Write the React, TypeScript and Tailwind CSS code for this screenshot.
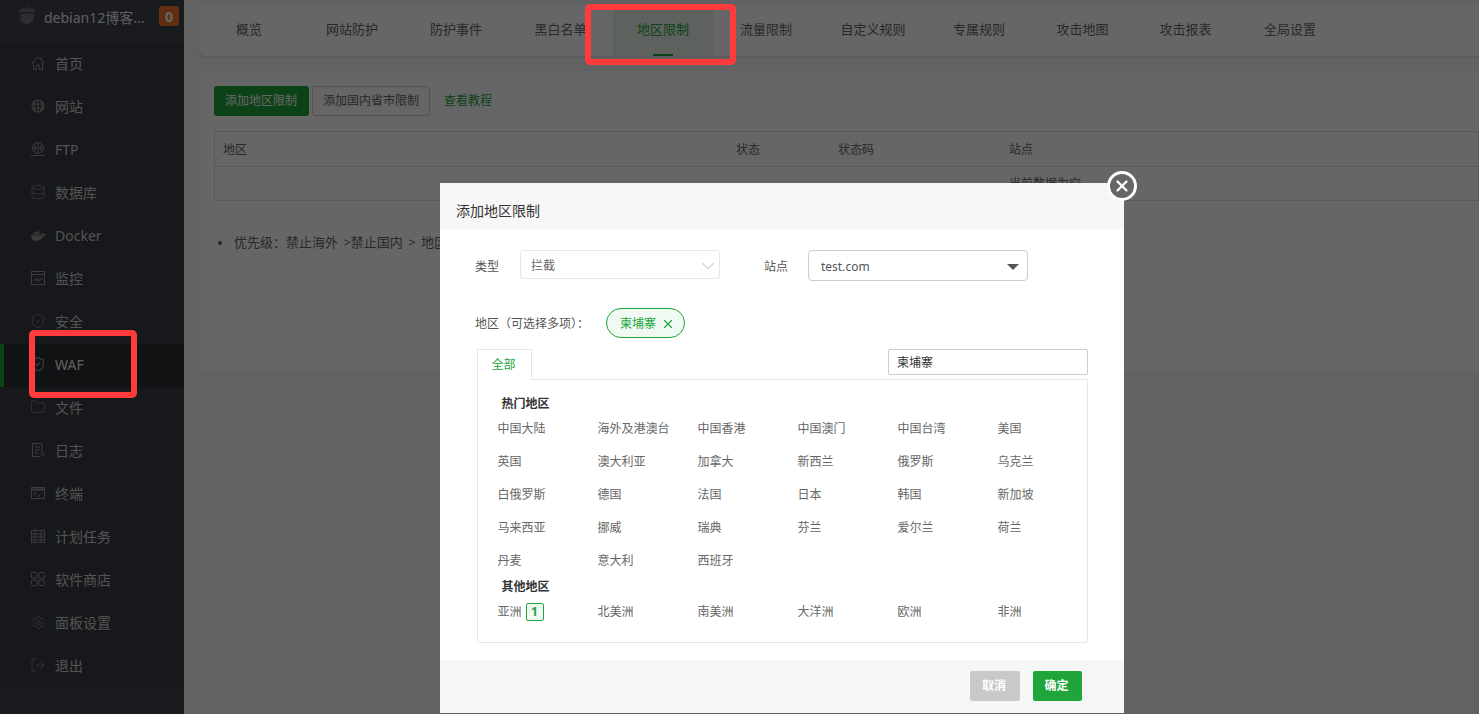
import React from 'react';
import {
  Database,
  ShieldCheck,
  Folder,
  Settings,
  LogOut,
  ChevronDown,
  X,
} from 'lucide-react';
import { FaDocker } from 'react-icons/fa';

const FONT = "font-['Noto_Sans','Noto_Sans_CJK_SC',sans-serif]";

const HomeIcon = () => (
  <svg width="14" height="14" viewBox="0 0 14 14" fill="none" stroke="currentColor" strokeWidth="1">
    <path d="M.5 7L7 .8l6.500 6.200M2.500 6v7.500h3.200V9h2.600v4.500h3.200V6M10 1.500v2.500" />
  </svg>
);

const FtpIcon = () => (
  <svg width="14" height="14" viewBox="0 0 14 14" fill="none" stroke="currentColor" strokeWidth="1">
    <circle cx="7" cy="6" r="5.5" />
    <path d="M1.5 6h11M7 .5v11M3.500 2.500c1 2 1 5 0 7M10.500 2.500c-1 2-1 5 0 7M0 13.500h14" />
  </svg>
);

const GlobeFilledIcon = () => (
  <svg width="14" height="14" viewBox="0 0 14 14" fill="none" stroke="currentColor" strokeWidth="1.2">
    <circle cx="7" cy="7" r="6" />
    <path d="M1 5h12M1 9h12M7 1v12M4 2c-1 3-1 7 0 10M10 2c1 3 1 7 0 10" />
  </svg>
);

const MonitorIcon = () => (
  <svg width="14" height="14" viewBox="0 0 14 14" fill="none" stroke="currentColor" strokeWidth="1">
    <rect x=".5" y=".5" width="13" height="13" />
    <path d="M.5 3.500h13M2 9h3l1-2 1.500 4L9 8h3" />
  </svg>
);

const LogIcon = () => (
  <svg width="14" height="14" viewBox="0 0 14 14" fill="none" stroke="currentColor" strokeWidth="1">
    <path d="M9 13.500H1.500V.5h9.500V9M4 4h5M4 7h5M4 10h3" />
    <circle cx="11.500" cy="11.500" r="1.500" />
  </svg>
);

const TerminalIcon = () => (
  <svg width="14" height="14" viewBox="0 0 14 14" fill="none" stroke="currentColor" strokeWidth="1">
    <rect x=".5" y="1.500" width="13" height="11" />
    <path d="M.5 3.500h13" strokeWidth="2" />
    <path d="M3 6l2 1.500L3 9M6 10h3" />
  </svg>
);

const TaskIcon = () => (
  <svg width="14" height="14" viewBox="0 0 14 14" fill="none" stroke="currentColor" strokeWidth="1">
    <rect x=".5" y="1.500" width="13" height="12" />
    <path d="M.5 5h13M.5 8h13M.5 11h13M4 .5v13M10 .5v13" />
  </svg>
);

const StoreIcon = () => (
  <svg width="14" height="14" viewBox="0 0 14 14" fill="none" stroke="currentColor" strokeWidth="1">
    <rect x=".5" y=".5" width="5.500" height="5.500" rx="1" />
    <rect x="8" y=".5" width="5.500" height="5.500" rx="1" />
    <rect x=".5" y="8" width="5.500" height="5.500" rx="1" />
    <rect x="8" y="8" width="5.500" height="5.500" rx="1" />
  </svg>
);

const Logo = () => (
  <svg width="18" height="20" viewBox="0 0 18 20" fill="#6f7174">
    <path d="M2.500 7.500h13V15l-6.500 4-6.500-4z" />
    <path d="M9 0l2 2.500h4l3 2.500-.5 1H.5L0 5l3-2.500h4z" />
  </svg>
);

const menu = [
  { label: '首页', icon: <HomeIcon /> },
  { label: '网站', icon: <GlobeFilledIcon /> },
  { label: 'FTP', icon: <FtpIcon /> },
  { label: '数据库', icon: <Database size={16} strokeWidth={1.1} className="-ml-px" /> },
  { label: 'Docker', icon: <FaDocker size={15} /> },
  { label: '监控', icon: <MonitorIcon /> },
  { label: '安全', icon: <ShieldCheck size={16} strokeWidth={1.1} className="-ml-px" /> },
  { label: 'WAF', icon: <ShieldCheck size={16} strokeWidth={1.8} className="-ml-px" />, active: true },
  { label: '文件', icon: <Folder size={16} strokeWidth={1.1} className="-ml-px" /> },
  { label: '日志', icon: <LogIcon /> },
  { label: '终端', icon: <TerminalIcon /> },
  { label: '计划任务', icon: <TaskIcon /> },
  { label: '软件商店', icon: <StoreIcon /> },
  { label: '面板设置', icon: <Settings size={15} strokeWidth={1.1} /> },
  { label: '退出', icon: <LogOut size={16} strokeWidth={1.1} className="-ml-px" /> },
];

const tabs = [
  { label: '网站防护', width: 'w-[104px]' },
  { label: '防护事件', width: 'w-[104px]' },
  { label: '黑白名单', width: 'w-[105px]' },
  { label: '地区限制', width: 'w-[100px]', active: true },
  { label: '流量限制', width: 'w-[106px]' },
  { label: '自定义规则', width: 'w-[108px]' },
  { label: '专属规则', width: 'w-[104px]' },
  { label: '攻击地图', width: 'w-[103px]' },
  { label: '攻击报表', width: 'w-[103px]' },
  { label: '全局设置', width: 'w-[106px]' },
];

const hotAreas = [
  '中国大陆', '海外及港澳台', '中国香港', '中国澳门', '中国台湾', '美国',
  '英国', '澳大利亚', '加拿大', '新西兰', '俄罗斯', '乌克兰',
  '白俄罗斯', '德国', '法国', '日本', '韩国', '新加坡',
  '马来西亚', '挪威', '瑞典', '芬兰', '爱尔兰', '荷兰',
  '丹麦', '意大利', '西班牙',
];

const otherAreas = ['亚洲', '北美洲', '南美洲', '大洋洲', '欧洲', '非洲'];

const Sidebar = () => (
  <aside className="w-[184px] shrink-0 bg-[#3f454f] flex flex-col">
    <div className="h-[43px] flex items-start pl-[18px] pr-[5px] pt-[6px]">
      <Logo />
      <span className="ml-[8px] w-[115px] h-[20px] leading-[24px] text-[14px] text-[#eaeaea] truncate">debian12博客...</span>
      <span className="w-[20px] h-[20px] rounded-[3px] bg-[#f0742a] text-white text-[14px] font-bold flex items-center justify-center">0</span>
    </div>
    <nav className="bg-[#373c44]">
      {menu.map((item) => (
        <div
          key={item.label}
          className={
            item.active
              ? 'h-[43px] flex items-center pb-[3px] pl-[27px] border-l-[4px] border-[#20a53a] bg-[#2b2e32] text-[#eeeeee] text-[14px]'
              : 'h-[43px] flex items-center pb-[3px] pl-[31px] text-[#d0d0d0] text-[14px]'
          }
        >
          <span className="w-[24px] flex text-[#939393]">{item.icon}</span>
          <span>{item.label}</span>
        </div>
      ))}
    </nav>
  </aside>
);

const Background = () => (
  <main className="flex-1 min-w-0 bg-[#f5f5f5] pl-[15px] pt-[4px]">
    <div className="h-[52px] bg-white rounded-l-[6px] flex items-stretch pl-[11px] shadow-sm">
      <div className="w-[90px] pl-[26px] flex items-center text-[13px] text-[#666666]">概览</div>
      {tabs.map((tab) => (
        <div
          key={tab.label}
          className={
            tab.active
              ? `${tab.width} relative flex items-center justify-center text-[13px] text-[#20a53a] bg-[#e9f6eb]`
              : `${tab.width} flex items-center justify-center text-[13px] text-[#666666] whitespace-nowrap`
          }
        >
          {tab.label}
          {tab.active && <span className="absolute bottom-0 left-[40px] w-[20px] h-[2px] bg-[#20a53a]" />}
        </div>
      ))}
    </div>
    <div className="mt-[15px] h-[300px] bg-white rounded-l-[6px] pl-[15px] pt-[15px]">
      <div className="flex items-center h-[30px] text-[12px]">
        <span className="h-[30px] w-[95px] pr-[1px] flex items-center justify-center bg-[#20a53a] text-white rounded-[3px]">添加地区限制</span>
        <span className="ml-[3px] h-[30px] w-[118px] flex items-center justify-center border border-[#cccccc] text-[#666666] rounded-[3px]">添加国内省市限制</span>
        <span className="ml-[14px] text-[#20a53a]">查看教程</span>
      </div>
      <div className="mt-[15px] border border-[#dddddd] text-[12px] text-[#666666]">
        <div className="h-[35px] flex items-center pl-[8px] pt-[1px] border-b border-[#dddddd]">
          <span className="w-[513px]">地区</span>
          <span className="w-[102px]">状态</span>
          <span className="w-[171px]">状态码</span>
          <span>站点</span>
        </div>
        <div className="h-[33px] flex items-center pl-[794px]">当前数据为空</div>
      </div>
      <ul className="mt-[32px] pl-[4px] text-[13px] text-[#666666]">
        <li className="flex items-center [word-spacing:2px]">
          <span className="w-[4px] h-[4px] rounded-full bg-[#666666] mr-[12px]" />
          优先级：禁止海外 &gt;禁止国内 &gt; 地区限制
        </li>
      </ul>
    </div>
  </main>
);

const Dialog = () => (
  <div className="absolute left-[440px] top-[183px] w-[684px] h-[530px] bg-white flex flex-col text-[12px] text-[#555555]">
    <div className="h-[46px] shrink-0 bg-[#f7f7f7] flex items-center pl-[16px] pt-[8px] text-[14px] text-[#333333]">添加地区限制</div>
    <div className="flex-1 pl-[35px] pr-[36px] pt-[21px]">
      <div className="flex items-start h-[31px]">
        <span className="w-[45px] h-[31px] pt-[2px] flex items-center text-[#555555]">类型</span>
        <div className="w-[200px] h-[29px] border border-[#e4e7ed] rounded-[3px] pl-[10px] pr-[0px] pt-[2px] flex items-center justify-between text-[#666666]">
          拦截
          <ChevronDown size={22} strokeWidth={0.8} className="text-[#999999]" />
        </div>
        <span className="ml-[44px] w-[44px] h-[31px] pt-[2px] flex items-center text-[#555555]">站点</span>
        <div className="w-[220px] h-[31px] border border-[#cccccc] rounded-[4px] pl-[12px] pr-[5px] pt-[2px] flex items-center justify-between text-[12px] text-[#555555]">
          test.com
          <span className="w-0 h-0 border-x-[6px] border-x-transparent border-t-[6px] border-t-[#555555] mr-[3px]" />
        </div>
      </div>
      <div className="mt-[27px] flex items-center h-[30px]">
        <span className="w-[131px] pt-[1px] text-[#555555]">地区（可选择多项）：</span>
        <span className="w-[79px] h-[30px] rounded-full border border-[#20a53a] bg-[#f0f9f2] text-[#20a53a] flex items-center pl-[13px] pt-[1px]">
          柬埔寨
          <X size={14} strokeWidth={2} className="ml-[5px]" />
        </span>
      </div>
      <div className="mt-[11px] flex items-start justify-between h-[31px] pl-[2px]">
        <span className="relative z-10 w-[55px] h-[31px] border border-[#e6e6e6] border-b-white bg-white text-[#20a53a] flex items-center justify-center pr-[2px]">全部</span>
        <input
          readOnly
          value="柬埔寨"
          className="w-[200px] h-[26px] border border-[#cccccc] rounded-[2px] pl-[8px] text-[12px] text-[#333333] outline-none"
        />
      </div>
      <div className="-mt-px ml-[2px] h-[264px] border border-[#e6e6e6] rounded-[2px] pt-[15px] pl-[19.500px] text-[#666666]">
        <div className="h-[18px] pl-[4px] flex items-center font-bold text-[#333333]">热门地区</div>
        <div className="grid grid-cols-[repeat(6,100px)] auto-rows-[33px]">
          {hotAreas.map((a) => (
            <span key={a} className="flex items-center pb-[2px]">{a}</span>
          ))}
        </div>
        <div className="h-[18px] pl-[4px] flex items-center font-bold text-[#333333]">其他地区</div>
        <div className="grid grid-cols-[repeat(6,100px)] auto-rows-[33px]">
          {otherAreas.map((a, i) => (
            <span key={a} className="flex items-center pb-[2px]">
              {a}
              {i === 0 && (
                <span className="ml-[4px] w-[18px] h-[18px] border border-[#20a53a] bg-[#f0f9f2] rounded-[2px] text-[#20a53a] font-bold flex items-center justify-center">1</span>
              )}
            </span>
          ))}
        </div>
      </div>
    </div>
    <div className="h-[53px] shrink-0 bg-[#f5f6f6] flex items-center justify-end pr-[42px] pb-[1px] gap-[13px]">
      <span className="w-[50px] h-[30px] bg-[#c9c9c9] rounded-[2px] text-white font-bold flex items-center justify-center pr-[2px]">取消</span>
      <span className="w-[49px] h-[30px] bg-[#20a53a] rounded-[2px] text-white font-bold flex items-center justify-center pr-[2px]">确定</span>
    </div>
  </div>
);

export default function App() {
  return (
    <div className={`${FONT} relative w-[1479px] h-[714px] overflow-hidden flex bg-[#f5f5f5]`}>
      <Sidebar />
      <Background />
      {/* page dimmer */}
      <div className="absolute inset-0 bg-black/60" />
      <Dialog />
      <button className="absolute left-[1107px] top-[171px] w-[30px] h-[30px] rounded-full border-[3px] border-white bg-[#666666] text-white flex items-center justify-center">
        <X size={18} strokeWidth={3} />
      </button>
      {/* red annotation boxes */}
      <div className="absolute left-[29px] top-[330px] w-[108px] h-[68px] border-[6px] border-[#ff3b3b] rounded-[5px]" />
      <div className="absolute left-[585px] top-[4px] w-[151px] h-[61px] border-[6px] border-[#ff3b3b] rounded-[5px]" />
    </div>
  );
}
